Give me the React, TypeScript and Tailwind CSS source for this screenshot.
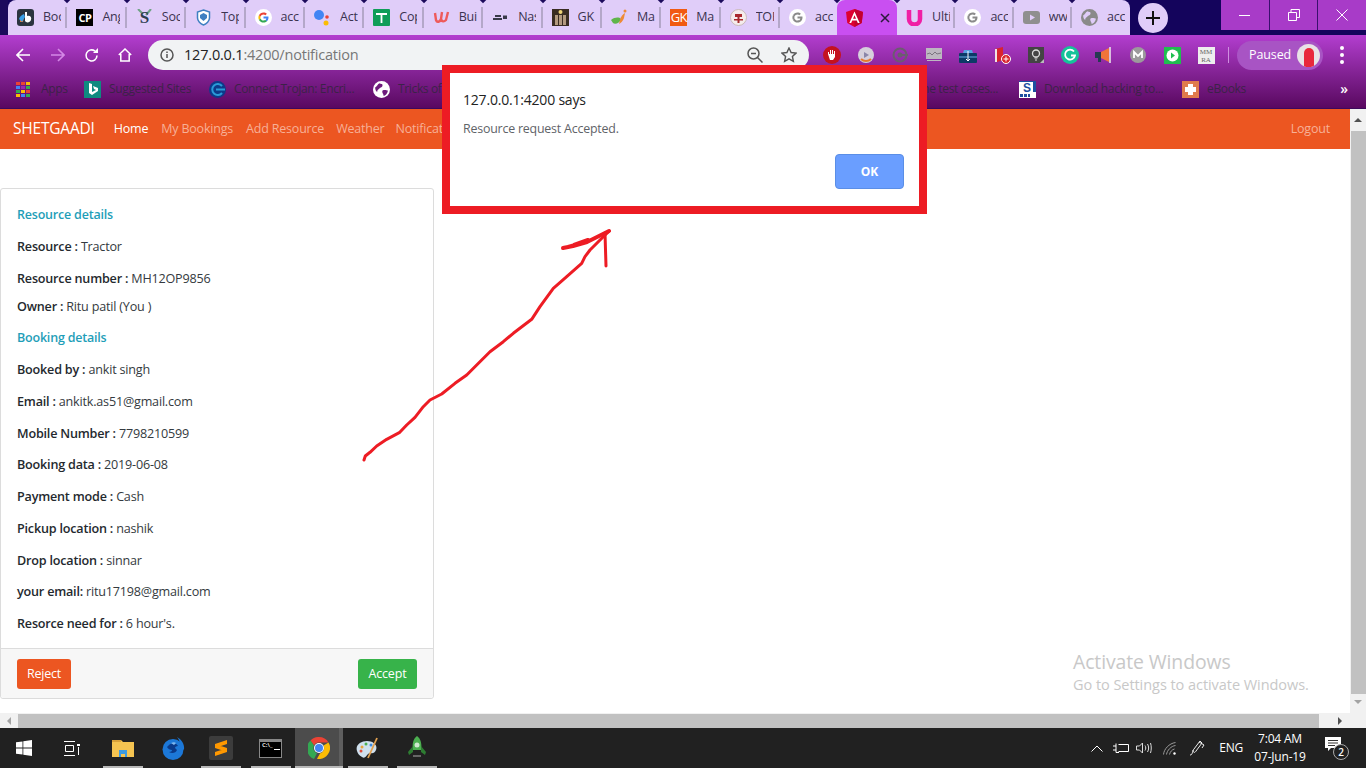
import React from "react";

const font = "font-['Open_Sans','Noto_Sans',sans-serif]";

function GoogleG({ grey }: { grey?: boolean }) {
  const c = grey ? ["#8a8a8a", "#8a8a8a", "#8a8a8a", "#8a8a8a"] : ["#4285f4", "#34a853", "#fbbc05", "#ea4335"];
  return (
    <svg width="17" height="17" viewBox="0 0 48 48">
      <circle cx="24" cy="24" r="24" fill="#fff" />
      <g transform="translate(9 9) scale(0.625)">
        <path fill={c[0]} d="M46.5 24.5c0-1.600-.1-3.100-.4-4.500H24v9h12.700c-.6 2.900-2.200 5.400-4.700 7l7.300 5.700c4.300-4 7.200-9.800 7.200-17.200z" />
        <path fill={c[1]} d="M24 47c6.200 0 11.400-2 15.300-5.500L32 35.800c-2.100 1.400-4.800 2.200-8 2.200-6.100 0-11.300-4.100-13.200-9.700l-7.500 5.800C7.100 41.700 15 47 24 47z" />
        <path fill={c[2]} d="M10.800 28.300c-.5-1.400-.7-2.800-.7-4.300s.3-3 .7-4.300l-7.500-5.800C1.800 17 1 20.400 1 24s.8 7 2.300 10.100l7.500-5.800z" />
        <path fill={c[3]} d="M24 10c3.400 0 6.400 1.200 8.800 3.400l6.500-6.500C35.400 3.300 30.200 1 24 1 15 1 7.100 6.300 3.300 13.900l7.500 5.800C12.700 14.100 17.900 10 24 10z" />
      </g>
    </svg>
  );
}

function Globe({ color, hole }: { color: string; hole: string }) {
  return (
    <svg width="17" height="17" viewBox="0 0 16 16">
      <circle cx="8" cy="8" r="8" fill={color} />
      <path fill={hole} d="M2 6c2-1 2-3 4-4 1 1 3 0 3 2S7 6 6 7s-2 1-2 3c-1 0-2-2-2-4zM9 9c2-1 4 0 5 0 0 2-2 5-4 5 0-2-2-3-1-5z" />
    </svg>
  );
}

const tabIcons: React.ReactNode[] = [
  <svg width="17" height="17" viewBox="0 0 17 17">
    <rect width="17" height="17" rx="3" fill="#2b3440" />
    <path d="M3 13c0-4 2-5 4-6l-1 6z" fill="#f2762e" />
    <path d="M2 10c1-3 3-4 5-5l1 3-3 5z" fill="#3aa0e8" />
    <path d="M8 3h2v4c3-1 5 1 4 4-1 3-5 3-6 1z" fill="#fff" />
  </svg>,
  <div className="w-[17px] h-[17px] bg-black text-white text-[11px] font-bold leading-[17px] text-center tracking-tighter">CP</div>,
  <svg width="17" height="17" viewBox="0 0 17 17">
    <path d="M2 0l5 5M15 0l-5 6" stroke="#6fa285" strokeWidth="2" />
    <text x="8.500" y="14" textAnchor="middle" fontSize="17" fontWeight="700" fontFamily="Liberation Serif" fill="#2d3e50">S</text>
  </svg>,
  <svg width="17" height="17" viewBox="0 0 17 17">
    <path d="M8.500 1l6 2v6c0 3-3 6-6 7-3-1-6-4-6-7V3z" fill="#fff" stroke="#3f7fc1" strokeWidth="1.500" />
    <path d="M5 6l3.500-2L12 6v3l-3.500 3L5 9z" fill="#3f7fc1" />
  </svg>,
  <GoogleG />,
  <svg width="17" height="17" viewBox="0 0 17 17">
    <circle cx="5" cy="6" r="5" fill="#4285f4" />
    <circle cx="13" cy="8" r="1.800" fill="#ea4335" />
    <circle cx="12" cy="14" r="2.500" fill="#fbbc05" />
  </svg>,
  <svg width="17" height="17" viewBox="0 0 17 17">
    <rect width="17" height="17" rx="1" fill="#0f9d58" />
    <path d="M3 5h11M8.500 5v9" stroke="#fff" strokeWidth="1.800" />
  </svg>,
  <svg width="17" height="17" viewBox="0 0 17 17">
    <path d="M2 4l1 7c1 3 4 2 5-1l1-7M8 10c1 3 3 3 5 1l2-8" fill="none" stroke="#ee5a5a" strokeWidth="2.400" />
  </svg>,
  <svg width="17" height="17" viewBox="0 0 17 17">
    <path d="M3 6h6v2H3zM1 9h9v2H1zM11 6l1 1 1-1 1 1 1-1v4h-4z" fill="#3a3a4a" />
  </svg>,
  <svg width="17" height="17" viewBox="0 0 17 17">
    <rect width="17" height="17" fill="#3a2c22" />
    <path d="M3 6h3v10H3zM7 6h3v10H7zM11 6h3v10h-3z" fill="#b3997f" />
    <circle cx="8.500" cy="3" r="2" fill="#f0d478" />
  </svg>,
  <svg width="17" height="17" viewBox="0 0 17 17">
    <path d="M0 11c4-3 8-3 10-1-1 4-6 6-8 4z" fill="#5fb54a" />
    <path d="M9 11c1-4 3-6 5-7l-1 5c-1 3-3 5-5 6z" fill="#ee8a35" />
    <circle cx="14" cy="2" r="1.500" fill="#ee8a35" />
  </svg>,
  <div className="w-[17px] h-[17px] bg-[#f15a12] text-white text-[13px] leading-[17px] text-center tracking-tighter">GK</div>,
  <svg width="17" height="17" viewBox="0 0 17 17">
    <circle cx="8.500" cy="8.500" r="8" fill="#f5ecec" stroke="#c9b9b9" />
    <path d="M5 5h7v3H5zM7.500 8h2v6h-2zM4 10h9v1.500H4z" fill="#a8282c" />
  </svg>,
  <GoogleG grey />,
  <svg width="17" height="18" viewBox="0 0 17 18">
    <path d="M8.500 0L17 3l-1.300 11-7.200 4-7.200-4L0 3z" fill="#dd0031" />
    <path d="M8.500 0L17 3l-1.300 11-7.200 4z" fill="#c3002f" />
    <path d="M8.500 2.500L3.300 14h1.900l1-2.600h4.600l1 2.600h1.900zM7 9.800l1.500-3.500L10 9.800z" fill="#fff" />
  </svg>,
  <svg width="17" height="17" viewBox="0 0 17 17">
    <path d="M3 1v9a5.500 5.500 0 0 0 11 0V1" fill="none" stroke="#f01fa5" strokeWidth="4.500" />
  </svg>,
  <GoogleG grey />,
  <svg width="17" height="17" viewBox="0 0 17 17">
    <rect y="2" width="17" height="13" rx="3" fill="#8f8f8f" />
    <path d="M7 5.500l5 3-5 3z" fill="#e0cdf9" />
  </svg>,
  <Globe color="#8a8a8a" hole="#e0cdf9" />,
];

const tabLabels = ["Boo", "Ang", "Soc", "Top", "acc", "Act", "Cop", "Buil", "Nas", "GK", "Mal", "Ma", "TOF", "acc", "", "Ulti", "acc", "ww", "acc"];

function tabWidth(index: number) {
  if (index < 13) return "w-[59.400px]";
  if (index === 13) return "w-[57px]";
  if (index === 14) return "w-[60px]";
  return "w-[58.300px]";
}

function Tab({ index }: { index: number }) {
  const active = index === 14;
  const noSep = active || index === 13 || index === 18;
  return (
    <div className={`relative h-[35px] shrink-0 flex items-center pl-[9px] ${tabWidth(index)} ${active ? "bg-[#c94ff1] rounded-t-[8px]" : ""} ${index === 13 ? "rounded-br-[8px]" : ""} ${index === 15 ? "rounded-bl-[8px]" : ""}`}>
      <div className="w-[17px] h-[17px] shrink-0 flex items-center justify-center">{tabIcons[index]}</div>
      {active ? (
        <svg className="ml-[17px]" width="10" height="10" viewBox="0 0 10 10">
          <path d="M1 1l8 8M9 1l-8 8" stroke="#2a1a3a" strokeWidth="1.500" />
        </svg>
      ) : (
        <span className="ml-[9px] w-[18px] overflow-hidden whitespace-nowrap text-[12.500px] tracking-[-0.2px] text-[#3b3350]">{tabLabels[index]}</span>
      )}
      {!noSep && <div className="absolute right-0 top-[7px] w-[2px] h-[21px] bg-[#b4a7c9]" />}
      {index !== 18 && <div className="absolute right-[-3px] top-[-4px] w-[6px] h-[6px] rotate-45 bg-[#1c0a5c]" />}
    </div>
  );
}

function Ext({ children }: { children: React.ReactNode }) {
  return <div className="w-[34px] h-[20px] flex items-center justify-center shrink-0">{children}</div>;
}

const extIcons: React.ReactNode[] = [
  <svg width="18" height="18" viewBox="0 0 18 18">
    <circle cx="9" cy="9" r="9" fill="#c4121f" />
    <path d="M5 8V6h1v2h1V4h1v4h1V4h1v4h1V5h1v6l-2 3H7z" fill="#fff" />
  </svg>,
  <svg width="16" height="16" viewBox="0 0 16 16">
    <circle cx="8" cy="8" r="8" fill="#d6d0dc" />
    <path d="M3 12a7 7 0 0 0 10 0" fill="none" stroke="#e67a2e" strokeWidth="2" />
    <path d="M6 5l5 3-5 3z" fill="#8a86a8" />
  </svg>,
  <svg width="16" height="16" viewBox="0 0 16 16">
    <circle cx="8" cy="8" r="6.500" fill="none" stroke="#6c5c70" strokeWidth="2" />
    <circle cx="8" cy="8" r="2.500" fill="#6c5c70" />
    <path d="M8 8h8" stroke="#6c5c70" strokeWidth="2" />
  </svg>,
  <svg width="16" height="16" viewBox="0 0 16 16">
    <rect y="1" width="16" height="11" fill="#bdb7c1" />
    <path d="M1 7l3-1 2 2 3-3 2 2 4-1" fill="none" stroke="#7b7580" />
    <rect x="1" y="13" width="14" height="1" fill="#bdb7c1" />
  </svg>,
  <svg width="18" height="16" viewBox="0 0 18 16">
    <path d="M5 3h8l1 3H4z" fill="#5aa0e0" />
    <rect y="6" width="18" height="10" rx="1" fill="#0d3a66" />
    <path d="M0 10h18" stroke="#6ab0e8" />
    <path d="M9 4v10M7 12l2 2 2-2" stroke="#fff" fill="none" />
  </svg>,
  <svg width="18" height="18" viewBox="0 0 18 18">
    <path d="M2 3l8-2v13l-6 2-2-1z" fill="#d9232e" />
    <path d="M2 3h2v13H2z" fill="#f1e4e4" />
    <circle cx="13" cy="13" r="4.500" fill="#d9232e" stroke="#fff" />
    <path d="M13 10.500v5M10.500 13h5" stroke="#fff" />
  </svg>,
  <svg width="16" height="16" viewBox="0 0 16 16">
    <rect width="16" height="16" fill="#444" />
    <circle cx="8" cy="6.500" r="3.500" fill="none" stroke="#ddd" strokeWidth="1.300" />
    <path d="M6.500 11h3M7 13h2" stroke="#ddd" />
    <path d="M12 16l4-4v4z" fill="#bbb" />
  </svg>,
  <svg width="18" height="18" viewBox="0 0 18 18">
    <circle cx="9" cy="9" r="9" fill="#15c39a" />
    <path d="M13 5.500A5 5 0 1 0 14 9.500h-4" fill="none" stroke="#fff" strokeWidth="1.800" />
  </svg>,
  <svg width="18" height="16" viewBox="0 0 18 16">
    <path d="M0 5h6v6H0zM3 11h3v4H3z" fill="#263a52" />
    <path d="M6 5l8-4v14l-8-4z" fill="#f0743a" />
    <path d="M15 0v16" stroke="#eee" strokeWidth="1.500" />
  </svg>,
  <svg width="16" height="16" viewBox="0 0 16 16">
    <circle cx="8" cy="8" r="8" fill="#9c9a9c" />
    <path d="M4 11V5l4 4 4-4v6" fill="none" stroke="#fff" strokeWidth="1.800" />
  </svg>,
  <svg width="17" height="17" viewBox="0 0 17 17">
    <rect width="17" height="17" fill="#1fbf4f" />
    <circle cx="8.500" cy="8.500" r="6" fill="#fff" />
    <path d="M7 5.500l4 3-4 3z" fill="#1fbf4f" />
  </svg>,
  <div className="w-[17px] h-[17px] bg-[#eee] text-[#666] font-['Liberation_Serif',serif] text-[7px] leading-[8px] text-center pt-[1px]">
    MM
    <br />
    RA
  </div>,
];

function BookmarkIcon({ type }: { type: string }) {
  if (type === "apps") {
    const colors = ["#ea4335", "#ea4335", "#fbbc05", "#4285f4", "#9c27b0", "#34a853", "#34a853", "#fbbc05", "#ea4335", "#fbbc05", "#4285f4", "#34a853"];
    return (
      <div className="grid grid-cols-3 gap-[1px] w-[14px] shrink-0">
        {colors.map((c, i) => (
          <div key={i} className="h-[3px]" style={{ backgroundColor: c }} />
        ))}
      </div>
    );
  }
  if (type === "bing")
    return (
      <svg width="17" height="17" viewBox="0 0 17 17" className="shrink-0">
        <rect width="17" height="17" fill="#0f8a80" />
        <path d="M5 2l3 1v8l4-2-2-1-1-3 5 2v3l-6 4-3-2z" fill="#fff" />
      </svg>
    );
  if (type === "connect")
    return (
      <svg width="17" height="17" viewBox="0 0 17 17" className="shrink-0">
        <circle cx="8.500" cy="8.500" r="8.500" fill="#0d3a8a" />
        <path d="M13 5a5.500 5.500 0 1 0 0 7" fill="none" stroke="#2a9ad8" strokeWidth="2" />
        <path d="M7 8.500h9" stroke="#2a9ad8" strokeWidth="2" />
      </svg>
    );
  if (type === "globe")
    return (
      <div className="shrink-0">
        <Globe color="#fff" hole="#6e1b7c" />
      </div>
    );
  if (type === "s")
    return (
      <svg width="17" height="17" viewBox="0 0 17 17" className="shrink-0">
        <rect width="17" height="17" fill="#fff" />
        <path d="M0 0h17v1H0zM14 0h3v11h-3z" fill="#1c4fa0" />
        <text x="8" y="10.500" textAnchor="middle" fontSize="12" fontWeight="700" fontFamily="Liberation Sans" fill="#1c4fa0">S</text>
        <path d="M1 13h3v3H1zM5 13h3v3H5zM9 13h2v3H9z" fill="#1c4fa0" />
      </svg>
    );
  return (
    <svg width="17" height="17" viewBox="0 0 17 17" className="shrink-0">
      <rect width="17" height="17" fill="#e07b4c" />
      <path d="M6 3h5v3h3v5h-3v3H6v-3H3V6h3z" fill="#fff" />
    </svg>
  );
}

const bookmarks = [
  { icon: "apps", label: "Apps", w: "w-[68px]" },
  { icon: "bing", label: "Suggested Sites", w: "w-[125px]" },
  { icon: "connect", label: "Connect Trojan: Encri...", w: "w-[164px]" },
  { icon: "globe", label: "Tricks of", w: "w-[200px]" },
];
const bookmarksRight = [
  { icon: "s", label: "Download hacking to...", w: "w-[163px]" },
  { icon: "plus", label: "eBooks", w: "w-[100px]" },
];

function Bookmark({ icon, label, w }: { icon: string; label: string; w: string }) {
  return (
    <div className={`flex items-center shrink-0 ${w}`}>
      <BookmarkIcon type={icon} />
      <span className={`${icon === "apps" ? "ml-[11px]" : "ml-[8px]"} text-[12px] tracking-[-0.35px] text-[#3c2248] whitespace-nowrap`}>{label}</span>
    </div>
  );
}

function Row({ label, value, tight }: { label: string; value: string; tight?: boolean }) {
  return (
    <p className={`h-[20px] leading-[20px] whitespace-nowrap text-[12.600px] text-[#343a40] tracking-[-0.2px] ${tight ? "mb-[8px]" : "mb-[11.700px]"}`}>
      <b className="font-semibold text-[#24292e]">{label}</b> {value}
    </p>
  );
}

function TaskIcon({ children, under, active, w }: { children: React.ReactNode; under?: boolean; active?: boolean; w: string }) {
  return (
    <div className={`relative h-[40px] flex items-center justify-center shrink-0 ${w} ${active ? "bg-[#4c4c4c]" : ""}`}>
      {children}
      {active && <div className="absolute top-0 right-0 w-[4px] h-[40px] bg-[#5e5e5e]" />}
      {under && <div className={`absolute bottom-0 left-0 right-0 mx-auto h-[2px] bg-[#b8b8b8] ${active ? "w-full" : "w-[40px]"}`} />}
    </div>
  );
}

const arrowShaft =
  "24,250 25.3,246 30,242.3 36.7,236 46.7,229.3 59.3,222.7 66.7,215 75,207.3 83.3,196.7 90,190 101.7,184 115,173.3 126.7,165 136.7,155 150,141.7 163.3,131.7 173.3,123.3 191.7,109.3 200,96.7 213.3,78.3 226.7,66.7 241.7,53.3 245,46.7 250,40 263.3,26.7 269.3,21";

export default function App() {
  return (
    <div className={`relative w-[1366px] h-[768px] bg-white overflow-hidden flex flex-col ${font}`}>
      {/* tab strip */}
      <div className="h-[35px] flex bg-[#14045c] shrink-0">
        <div className="w-[8px] shrink-0 bg-[#1c0a5c]" />
        <div className="w-[1122px] flex bg-[#e0cdf9] rounded-t-[8px] shrink-0">
          {tabLabels.map((_, i) => (
            <Tab key={i} index={i} />
          ))}
        </div>
        <div className="w-[91px] flex items-center pl-[8px] shrink-0">
          <div className="w-[30px] h-[30px] rounded-full bg-[#e0cdf9] flex items-center justify-center">
            <svg width="14" height="14" viewBox="0 0 14 14">
              <path d="M7 0v14M0 7h14" stroke="#111" strokeWidth="2" />
            </svg>
          </div>
        </div>
        <div className="flex-1 h-[30px] flex bg-[#a83bc8] text-white">
          <div className="flex-1 flex items-center justify-center border-r border-[#3a0f6e]">
            <div className="w-[11px] h-[1px] bg-white" />
          </div>
          <div className="flex-1 flex items-center justify-center border-r border-[#3a0f6e]">
            <svg width="12" height="12" viewBox="0 0 12 12" fill="none" stroke="#fff">
              <path d="M.5 3.500h8v8h-8zM3 3.500V.5h8.500v8H8.500" />
            </svg>
          </div>
          <div className="flex-1 flex items-center justify-center">
            <svg width="12" height="12" viewBox="0 0 12 12" stroke="#fff">
              <path d="M.5.5l11 11M11.500.5l-11 11" />
            </svg>
          </div>
        </div>
      </div>

      {/* toolbar + bookmarks */}
      <div className="h-[74px] shrink-0 bg-gradient-to-b from-[#b33ed0] to-[#590860] border-b border-[#3c0a5c]">
        <div className="h-[35px] flex items-center">
          <div className="w-[148px] h-[30px] mt-[5px] flex items-center shrink-0">
            <svg className="ml-[16px]" width="14" height="14" viewBox="0 0 14 14" fill="none" stroke="#fff" strokeWidth="1.600">
              <path d="M14 7H1M7 1L1 7l6 6" />
            </svg>
            <svg className="ml-[21px]" width="14" height="14" viewBox="0 0 14 14" fill="none" stroke="#d488e6" strokeWidth="1.600">
              <path d="M0 7h13M7 1l6 6-6 6" />
            </svg>
            <svg className="ml-[19px]" width="15" height="15" viewBox="0 0 15 15" fill="none" stroke="#fff" strokeWidth="1.600">
              <path d="M13 7.500A5.500 5.500 0 1 1 11 3.200" />
              <path d="M14 0v5H9z" fill="#fff" stroke="none" />
            </svg>
            <svg className="ml-[19px]" width="14" height="14" viewBox="0 0 14 14" fill="none" stroke="#fff" strokeWidth="1.500">
              <path d="M0.800 7L7 1l6.200 6M2.800 6v7h8.400V6" />
            </svg>
          </div>
          <div className="w-[661px] h-[30px] mt-[5px] rounded-full bg-[#f1f3f4] flex items-center shrink-0 pl-[12px] pr-[11px]">
            <svg width="14" height="14" viewBox="0 0 14 14" fill="none" stroke="#555" strokeWidth="1.500">
              <circle cx="7" cy="7" r="6" />
              <path d="M7 6v4M7 3.500v1.500" />
            </svg>
            <span className="ml-[10px] text-[14.500px] tracking-[-0.2px] text-[#222]">
              127.0.0.1<span className="text-[#777]">:4200/notification</span>
            </span>
            <svg className="ml-auto" width="16" height="16" viewBox="0 0 16 16" fill="none" stroke="#555" strokeWidth="1.500">
              <circle cx="6.500" cy="6.500" r="5.500" />
              <path d="M4 6.500h5M10.500 10.500l5 5" />
            </svg>
            <svg className="ml-[18px] mr-[1px]" width="16" height="16" viewBox="0 0 16 16" fill="none" stroke="#555" strokeWidth="1.400">
              <path d="M8 1l2.100 4.500 4.900.6-3.600 3.300 1 4.900L8 11.800l-4.400 2.500 1-4.900L1 6.100l4.900-.6z" />
            </svg>
          </div>
          <div className="flex items-center mt-[5px] ml-[6px]">
            {extIcons.map((icon, i) => (
              <Ext key={i}>{icon}</Ext>
            ))}
          </div>
          <div className="w-[1px] h-[16px] bg-[#cf8fe0] mt-[5px] ml-[5px] shrink-0" />
          <div className="ml-[8px] mt-[5px] w-[86px] h-[29px] rounded-full bg-[#a854c4] flex items-center pl-[12px] shrink-0">
            <span className="text-[12.500px] text-white tracking-[-0.1px]">Paused</span>
            <div className="ml-auto mr-[3px] w-[23px] h-[23px] rounded-full bg-[#e8e2e6] flex items-center justify-center overflow-hidden">
              <div className="w-[10px] h-[19px] mt-[4px] rounded-t-full bg-[#e8283c]" />
            </div>
          </div>
          <div className="ml-[17px] mt-[5px] flex flex-col gap-[3px]">
            <div className="w-[4px] h-[4px] rounded-full bg-white" />
            <div className="w-[4px] h-[4px] rounded-full bg-white" />
            <div className="w-[4px] h-[4px] rounded-full bg-white" />
          </div>
        </div>
        <div className="h-[38px] flex items-center pl-[16px] relative">
          {bookmarks.map((b) => (
            <Bookmark key={b.label} {...b} />
          ))}
          {/* only the tail of this one shows beside the alert */}
          <div className="w-[446px] shrink-0 flex justify-end pr-[21px]">
            <span className="text-[12px] tracking-[-0.35px] text-[#3c2248] whitespace-nowrap">online test cases...</span>
          </div>
          {bookmarksRight.map((b) => (
            <Bookmark key={b.label} {...b} />
          ))}
          <span className="absolute right-[18px] top-[8px] text-[14px] font-semibold text-white">»</span>
        </div>
      </div>

      {/* page + scrollbar */}
      <div className="flex-1 flex min-h-0">
        <div className="flex-1 flex flex-col min-w-0">
          <nav className="h-[40px] bg-[#ec5621] flex items-center pl-[13px] pr-[20px] text-[12.500px] tracking-[-0.2px] shrink-0">
            <span className="text-white text-[15.500px] tracking-[-0.2px] mr-[19px]">SHETGAADI</span>
            <span className="text-white mr-[13px]">Home</span>
            <span className="text-[#f7b097] mr-[13px]">My Bookings</span>
            <span className="text-[#f7b097] mr-[12px]">Add Resource</span>
            <span className="text-[#f7b097] mr-[11px]">Weather</span>
            <span className="text-[#f7b097]">Notification</span>
            <span className="text-[#f7b097] ml-auto">Logout</span>
          </nav>
          <div className="pt-[39px]">
            <div className="w-[434px] h-[511px] border border-[#dcdcdc] rounded-[3px] flex flex-col">
              <div className="flex-1 pl-[16px] pt-[16px]">
                <p className="h-[20px] leading-[20px] mb-[12px] text-[12.500px] font-semibold text-[#1f9eb8] tracking-[-0.2px]">Resource details</p>
                <Row label="Resource :" value="Tractor" />
                <Row label="Resource number :" value="MH12OP9856" tight />
                <Row label="Owner :" value="Ritu patil (You )" />
                <p className="h-[20px] leading-[20px] mb-[12px] text-[12.500px] font-semibold text-[#1f9eb8] tracking-[-0.2px]">Booking details</p>
                <Row label="Booked by :" value="ankit singh" />
                <Row label="Email :" value="ankitk.as51@gmail.com" />
                <Row label="Mobile Number :" value="7798210599" />
                <Row label="Booking data :" value="2019-06-08" />
                <Row label="Payment mode :" value="Cash" />
                <Row label="Pickup location :" value="nashik" />
                <Row label="Drop location :" value="sinnar" />
                <Row label="your email:" value="ritu17198@gmail.com" />
                <Row label="Resorce need for :" value="6 hour's." />
              </div>
              <div className="h-[50px] border-t border-[#dcdcdc] bg-[#f7f7f7] rounded-b-[3px] flex items-center justify-between px-[16px]">
                <button className="w-[54px] h-[30px] pt-[2px] rounded-[3px] bg-[#ec5621] text-white text-[12.500px] tracking-[-0.2px]">Reject</button>
                <button className="w-[59px] h-[30px] pt-[2px] rounded-[3px] bg-[#37b34a] text-white text-[12.500px] tracking-[-0.2px]">Accept</button>
              </div>
            </div>
          </div>
        </div>
        <div className="w-[16px] bg-[#f1f1f1] flex flex-col items-center shrink-0">
          <div className="h-[22px] flex items-center justify-center">
            <div className="w-0 h-0 border-x-[4px] border-x-transparent border-b-[4px] border-b-[#505050]" />
          </div>
          <div className="w-[15px] ml-[1px] h-[563px] bg-[#c1c1c1]" />
          <div className="h-[16px] flex items-center justify-center">
            <div className="w-0 h-0 border-x-[4px] border-x-transparent border-t-[4px] border-t-[#a3a3a3]" />
          </div>
        </div>
      </div>
      <div className="h-[15px] bg-[#f1f1f1] flex items-center shrink-0">
        <div className="w-[18px] flex justify-center">
          <div className="w-0 h-0 border-y-[4px] border-y-transparent border-r-[4px] border-r-[#a3a3a3]" />
        </div>
        <div className="w-[1301px] h-[14px] mt-[1px] bg-[#c1c1c1]" />
        <div className="w-[42px] flex justify-center">
          <div className="w-0 h-0 border-y-[4px] border-y-transparent border-l-[4px] border-l-[#505050]" />
        </div>
      </div>

      {/* taskbar */}
      <div className="h-[40px] bg-[#212121] flex items-center shrink-0 text-white">
        <TaskIcon w="w-[48px]">
          <svg width="16" height="16" viewBox="0 0 16 16" fill="#fff">
            <path d="M0 2.300l6.500-.9v6.200H0zM7.300 1.300L16 0v7.600H7.300zM0 8.400h6.500v6.200L0 13.700zM7.300 8.400H16V16l-8.700-1.200z" />
          </svg>
        </TaskIcon>
        <TaskIcon w="w-[47px]">
          <svg width="17" height="15" viewBox="0 0 17 15" fill="none" stroke="#fff">
            <path d="M1 .5h11M1 14.500h11M2.500 4.500h8v6h-8zM15.500 6v8" />
            <path d="M14 3h3v2h-3z" fill="#fff" stroke="none" />
          </svg>
        </TaskIcon>
        <TaskIcon w="w-[56px]" under>
          <svg width="22" height="18" viewBox="0 0 22 18">
            <path d="M0 1h9l2 2h11v15H0z" fill="#f5c451" />
            <path d="M0 1h9v2H0z" fill="#d9a23a" />
            <path d="M7 11h8v7h-2v-3H9v3H7z" fill="#3d9be0" />
          </svg>
        </TaskIcon>
        <TaskIcon w="w-[44px]">
          <svg width="23" height="23" viewBox="0 0 23 23">
            <circle cx="11" cy="12.500" r="10.500" fill="#1c78d8" />
            <path d="M15 0c4 2 8 7 7 13-2-2-3-4-4-5 0-3-1-6-3-8z" fill="#1c78d8" />
            <path d="M7 8c3-3 8-2 9 1-2 0-3 1-3 2l2 2c-1 3-5 4-8 2 2 0 3-1 3-2-2 0-4-1-5-3z" fill="#0a3a8a" />
            <path d="M9 6c2-1 4-1 5 0l-2 2z" fill="#7fb8f0" />
          </svg>
        </TaskIcon>
        <TaskIcon w="w-[51px]" under>
          <div className="w-[24px] h-[24px] rounded-[2px] bg-[#3c3c3c] flex items-center justify-center">
            <svg width="12" height="16" viewBox="0 0 12 16" fill="#ff9800">
              <path d="M12 0v4L0 8V4zM12 8v4L0 16v-4zM0 4l12 4v4L0 8z" />
            </svg>
          </div>
        </TaskIcon>
        <TaskIcon w="w-[49px]" under>
          <div className="w-[23px] h-[19px] bg-black border border-[#888] border-t-[3px] flex flex-col pl-[2px]">
            <span className="text-[6px] leading-[7px] font-bold text-[#ddd]">C:\_</span>
            <div className="ml-[12px] w-[6px] h-[1px] bg-white" />
          </div>
        </TaskIcon>
        <TaskIcon w="w-[48px]" active under>
          <svg width="22" height="22" viewBox="0 0 22 22">
            <path d="M11 0a11 11 0 0 1 9.500 5.500H11a5.500 5.500 0 0 0-5 3L2.500 3.500A11 11 0 0 1 11 0z" fill="#ea4335" />
            <path d="M2.500 3.500L6 8.500A5.500 5.500 0 0 0 9 16.200L6 22A11 11 0 0 1 2.500 3.500z" fill="#34a853" />
            <path d="M20.500 5.500A11 11 0 0 1 9 21.800L12 16.400a5.500 5.500 0 0 0 3.500-7.900z" fill="#fbbc05" />
            <circle cx="11" cy="11" r="5" fill="#fff" />
            <circle cx="11" cy="11" r="4" fill="#4285f4" />
          </svg>
        </TaskIcon>
        <TaskIcon w="w-[50px]" under>
          <svg width="24" height="24" viewBox="0 0 24 24">
            <path d="M1 15c-2-6 4-10 10-10s11 4 9 9-6 2-8 4-3 5-6 3-4-3-5-6z" fill="#cfe0ee" />
            <circle cx="6" cy="11" r="1.500" fill="#e8a33a" />
            <circle cx="10" cy="8" r="1.500" fill="#4caf50" />
            <circle cx="15" cy="9" r="1.500" fill="#3d8be0" />
            <circle cx="5" cy="15" r="1.500" fill="#e04b3a" />
            <path d="M12 22L21 2" stroke="#e0a050" strokeWidth="1.800" />
          </svg>
        </TaskIcon>
        <TaskIcon w="w-[48px]" under>
          <svg width="20" height="24" viewBox="0 0 20 24">
            <path d="M10 0c4 3 5 8 4 14H6C5 8 6 3 10 0z" fill="#4caf50" />
            <path d="M6 10L1 16l1 3 4-3zM14 10l5 6-1 3-4-3z" fill="#2e7d32" />
            <circle cx="10" cy="9" r="2.500" fill="#cfe8cf" />
            <path d="M6 20h8" stroke="#666" strokeWidth="2" />
          </svg>
        </TaskIcon>
        <div className="flex-1" />
        <svg width="12" height="7" viewBox="0 0 12 7" fill="none" stroke="#fff">
          <path d="M.5 6.500L6 1l5.500 5.500" />
        </svg>
        <svg className="ml-[10px]" width="16" height="10" viewBox="0 0 16 10" fill="none" stroke="#fff">
          <path d="M5.500 1.500h10v7h-10M0 3h3M0 7h3M3 .5v9h3" />
        </svg>
        <svg className="ml-[7px]" width="16" height="12" viewBox="0 0 16 12" fill="none" stroke="#ddd">
          <path d="M.5 4v4h3l3 3V1l-3 3zM9 3.500c1 1.500 1 3.500 0 5M11.500 2c1.500 2.500 1.500 5.500 0 8M14.500 1c1 3 1 7 0 10" />
        </svg>
        <svg className="ml-[11px]" width="14" height="13" viewBox="0 0 14 13" fill="none" stroke="#999">
          <path d="M.5 12.500C1 7 6 1.500 12.500.5M3.500 12.500C4 8.500 8 4 12.500 3.500M6.500 12.500c.5-2.500 2.500-5 5-5.500" />
          <circle cx="11.500" cy="11.500" r="1.200" fill="#fff" stroke="none" />
        </svg>
        <svg className="ml-[12px]" width="17" height="16" viewBox="0 0 17 16" fill="none" stroke="#eee">
          <path d="M1 15c3 0 2-4 4-6l6-8 2 2-6 8c-1 2-3 2-3-1M10 2l5 3-2 3" />
        </svg>
        <span className="ml-[13px] text-[12px] text-white tracking-[-0.2px]">ENG</span>
        <div className="w-[72px] ml-[1px] flex flex-col items-center text-[12px] leading-[18px] text-white tracking-[-0.2px]">
          <span>7:04 AM</span>
          <span>07-Jun-19</span>
        </div>
        <div className="relative w-[24px] h-[24px] ml-[9px] mr-[17px]">
          <svg width="16" height="14" viewBox="0 0 16 14" className="mt-[1px]">
            <path d="M0 0h16v11H6l-3 3v-3H0z" fill="#fff" />
            <path d="M3 3.500h10M3 6h10M3 8.500h7" stroke="#333" />
          </svg>
          <div className="absolute right-0 bottom-0 w-[16px] h-[16px] rounded-full border border-[#aaa] bg-[#212121] text-[10px] leading-[14px] text-center font-semibold text-white">2</div>
        </div>
      </div>

      {/* watermark */}
      <div className="absolute left-[1073px] top-[650px] text-[#c8c8c8] pointer-events-none">
        <p className="text-[19.400px] leading-[24px] tracking-[-0.1px]">Activate Windows</p>
        <p className="text-[14.500px] leading-[21px] tracking-[-0.05px]">Go to Settings to activate Windows.</p>
      </div>

      {/* alert dialog with the red marking */}
      <div className="absolute left-[442px] top-[65px] w-[485px] h-[149px] border-[8px] border-[#ed1c24] bg-white pl-[13px] pt-[17px]">
        <p className="text-[14px] leading-[20px] text-[#222] tracking-[-0.2px]">127.0.0.1:4200 says</p>
        <p className="mt-[10px] text-[12.400px] leading-[18px] text-[#5f6368] tracking-[-0.2px]">Resource request Accepted.</p>
        <div className="mt-[16px] flex justify-end pr-[15px]">
          <button className="w-[69px] h-[35px] rounded-[4px] bg-[#6a9eff] border border-[#5a8ee6] text-white text-[12px] font-bold">OK</button>
        </div>
      </div>

      {/* hand drawn arrow */}
      <svg className="absolute left-[340px] top-[210px]" width="300" height="270" viewBox="0 0 300 270" fill="none" stroke="#ed1c24" strokeWidth="3" strokeLinejoin="round" strokeLinecap="round">
        <polyline points={arrowShaft} />
        <path d="M223 38l10-2 14-4 22-11M228 37l18-5M234 35l14-5" strokeWidth="4" />
        <path d="M265 23l1 33" />
      </svg>
    </div>
  );
}
